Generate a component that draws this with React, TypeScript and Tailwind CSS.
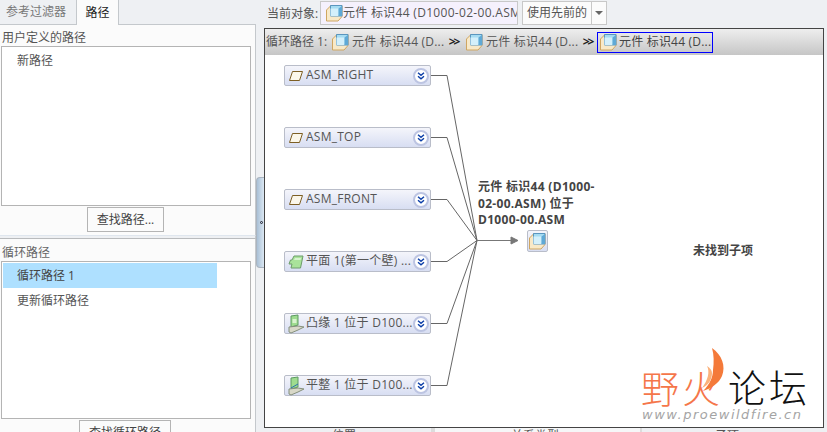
import type { ReactNode } from "react"

const FONT = "font-['Open_Sans','Noto_Sans_CJK_SC',sans-serif]"

function Cube({ className = "" }: { className?: string }) {
  return (
    <svg viewBox="0 0 17 17" className={className}>
      <path d="M0.5 5 L4.5 1 V0.5 H16 V11.5 L12 16 H0.5 Z" fill="#f8e9c8" stroke="#cfa662" />
      <path d="M4.5 0.5 H16 V11 H4.5 Z" fill="#a6dcf2" stroke="#5a96bf" />
      <path d="M4.5 3.5 H12.5 V11 H4.5 Z" fill="#d4f0fb" />
      <path d="M12.5 11 L16 11 V1 L12.5 3.5 Z" fill="#5fa9d6" />
    </svg>
  )
}

function DatumIcon() {
  return (
    <svg viewBox="0 0 16 12" className="h-3 w-4">
      <path d="M4.5 1.5 H14.5 L11.5 10.5 H1.5 Z" fill="#fbf7ea" stroke="#7d5f24" />
    </svg>
  )
}

function PlaneIcon() {
  return (
    <svg viewBox="0 0 16 14" className="h-[14px] w-4">
      <path d="M4 5 L6 1 H15 L12.5 13 H3 L4 9 H1 L2.5 5 Z" fill="#a9e39a" stroke="#6d9c6a" />
      <path d="M7 3 H13 L12.5 5 H6 Z" fill="#d6f3cd" />
    </svg>
  )
}

function SheetIcon({ line = false }: { line?: boolean }) {
  return (
    <svg viewBox="0 0 17 20" className="h-5 w-[17px]">
      <path d="M3 2 L10 1 V11 L3 13 Z" fill="#9fdc8f" stroke="#5d9a62" />
      <path d="M1 13 L10 12 L16 13 L10 16 L3 19 L1 18 Z" fill="#d8d8c8" stroke="#85907c" />
      {line ? <path d="M3 12 L10 8" stroke="#2a6fb0" /> : <path d="M4.5 5 H8.5 V9 H4.5 Z" fill="#d9f3cf" />}
    </svg>
  )
}

function ExpandButton() {
  return (
    <span className="flex h-[16px] w-[16px] shrink-0 items-center justify-center rounded-full border-2 border-[#bcc4e2] bg-white">
      <svg viewBox="0 0 8 8" className="h-2 w-2" fill="none" stroke="#0b3ea8" strokeWidth="1.4">
        <path d="M1 0.8 L4 3.4 L7 0.8" />
        <path d="M1 4.2 L4 6.8 L7 4.2" />
      </svg>
    </span>
  )
}

const nodes: { label: string; top: string; icon: ReactNode }[] = [
  { label: "ASM_RIGHT", top: "top-[10px]", icon: <DatumIcon /> },
  { label: "ASM_TOP", top: "top-[72px]", icon: <DatumIcon /> },
  { label: "ASM_FRONT", top: "top-[134px]", icon: <DatumIcon /> },
  { label: "平面 1(第一个壁) ...", top: "top-[196px]", icon: <PlaneIcon /> },
  { label: "凸缘 1 位于 D100...", top: "top-[258px]", icon: <SheetIcon /> },
  { label: "平整 1 位于 D100...", top: "top-[320px]", icon: <SheetIcon line /> },
]

const lineYs = [20, 82, 144, 206, 268, 330]

function Crumb({ selected = false }: { selected?: boolean }) {
  return (
    <span
      className={
        selected
          ? "-ml-[3px] flex h-[21px] w-[116px] items-center gap-[2px] border border-[#0000ff] pl-[2px] tracking-[0.2px] text-[#444]"
          : "flex w-[114px] items-center gap-[3px] tracking-[0.2px] text-[#555]"
      }
    >
      <Cube className="h-[17px] w-[17px] shrink-0" />
      <span className="whitespace-nowrap">元件 标识44 (D...</span>
    </span>
  )
}

function Chevrons() {
  return <span className="mr-[5px] w-[15px] text-center font-bold tracking-[-2px] text-[#222]">{">>"}</span>
}

function ListPanelButton({ label, className }: { label: string; className: string }) {
  return (
    <div className={`flex shrink-0 items-center justify-center border border-[#b4b4b4] bg-[#fbfbfb] text-[#444] ${className}`}>
      {label}
    </div>
  )
}

export default function App() {
  return (
    <div className={`flex h-[432px] w-[827px] overflow-hidden bg-[#eef0f3] text-xs ${FONT}`}>
      {/* left column */}
      <aside className="flex w-[256px] shrink-0 flex-col">
        <div className="flex h-[24px] shrink-0 items-end">
          <span className="flex h-[24px] w-[76px] items-center justify-center pr-[4px] text-[#777]">参考过滤器</span>
          <span className="z-10 -mb-px flex h-[25px] w-[43px] items-center justify-center border-x border-[#c4c8cc] bg-[#fbfbfb] text-[#222]">
            路径
          </span>
        </div>
        <div className="flex h-[211px] shrink-0 flex-col border-r border-t border-[#c4c8cc] bg-[#fbfbfb] pl-px pr-[4px]">
          <div className="h-[21px] shrink-0 pl-[1px] pt-[4px] leading-[17px] text-[#555]">用户定义的路径</div>
          <div className="h-[160px] shrink-0 border border-[#b4b4b4] bg-white pl-[15px] pt-[4px] leading-[20px] text-[#555]">新路径</div>
          <ListPanelButton label="查找路径..." className="ml-[86px] mt-[1px] h-[25px] w-[77px]" />
        </div>
        <div className="h-[4px] shrink-0 border-y border-r border-t-[#dfe6ee] border-b-[#b9bbbd] border-r-[#c4c8cc] bg-[#eef0f3]" />
        <div className="flex flex-1 flex-col border-r border-[#c4c8cc] bg-[#fbfbfb] pl-px pr-[4px]">
          <div className="h-[22px] shrink-0 pl-[1px] pt-[5px] leading-[17px] text-[#666]">循环路径</div>
          <div className="h-[158px] shrink-0 border border-[#b4b4b4] bg-white p-px">
            <div className="flex h-[25px] w-[214px] items-center bg-[#aee0ff] pl-[14px] text-[#444]">循环路径 1</div>
            <div className="pl-[14px] pt-[3px] leading-[20px] text-[#555]">更新循环路径</div>
          </div>
          <ListPanelButton label="查找循环路径" className="ml-[78px] mt-[1px] h-[25px] w-[92px]" />
        </div>
      </aside>

      {/* splitter */}
      <div className="w-[8px] shrink-0 pt-[177px]">
        <div className="flex h-[91px] w-[8px] items-center justify-end rounded-l-[4px] border border-r-0 border-[#aab4bf] bg-gradient-to-r from-[#a9c0d6] to-[#dbe7f2] pr-[1px]">
          <span className="h-[3px] w-[3px] rounded-full border border-[#223]" />
        </div>
      </div>

      {/* right column */}
      <main className="flex min-w-0 flex-1 flex-col">
        <div className="flex h-[28px] shrink-0 items-start pt-px">
          <span className="ml-[3px] mt-[4px] w-[53px] leading-[17px] text-[#555]">当前对象:</span>
          <div className="flex h-[24px] w-[198px] items-center overflow-hidden border border-[#c8c8c8] bg-[#f5f1fd] pl-[5px] tracking-[0.3px] text-[#555]">
            <Cube className="h-[17px] w-[17px] shrink-0" />
            <span className="whitespace-nowrap">元件 标识44 (D1000-02-00.ASM</span>
          </div>
          <div className="ml-[4px] flex h-[24px] w-[85px] border border-[#c8c8c8] bg-[#fbfbfb] text-[#555]">
            <span className="flex flex-1 items-center justify-center border-r border-[#c8c8c8]">使用先前的</span>
            <span className="flex w-[14px] items-center justify-center">
              <span className="border-x-[4px] border-t-[4px] border-x-transparent border-t-[#666]" />
            </span>
          </div>
        </div>

        <div className="relative mr-[3px] flex h-[400px] shrink-0 flex-col border border-[#444] bg-white">
          <div className="flex h-[26px] shrink-0 items-center bg-gradient-to-b from-[#eeeeee] to-[#c6c6c6] pl-px">
            <span className="mr-[5px] w-[61px] whitespace-nowrap text-[#555]">循环路径 1:</span>
            <Crumb />
            <Chevrons />
            <Crumb />
            <Chevrons />
            <Crumb selected />
          </div>

          {/* diagram canvas */}
          <div className="relative flex-1">
            <svg className="absolute inset-0 h-full w-full" fill="none" stroke="#666">
              {lineYs.map((y) => (
                <path key={y} d={`M166 ${y + 0.5} H182 L212 185.5`} />
              ))}
              <path d="M212 185.5 H246" stroke="#777" />
              <path d="M246 182 L253 185.5 L246 189 Z" fill="#777" stroke="#777" />
            </svg>

            {nodes.map((n) => (
              <div
                key={n.label}
                className={`absolute left-[19px] flex h-[21px] w-[147px] items-center rounded-[2px] border border-[#b9bdc9] bg-gradient-to-b from-[#f4f5fb] to-[#d8def2] pl-[1px] pr-[1px] ${n.top}`}
              >
                <span className="flex w-[20px] shrink-0 justify-center">{n.icon}</span>
                <span className="flex-1 overflow-hidden whitespace-nowrap pb-[2px] tracking-[0.25px] text-[#555]">{n.label}</span>
                <ExpandButton />
              </div>
            ))}

            <div className="absolute left-[213px] top-[124px] w-[125px] font-bold leading-[16.5px] tracking-[0.3px] text-[#444]">
              元件 标识44 (D1000-
              <br />
              02-00.ASM) 位于
              <br />
              D1000-00.ASM
            </div>
            <div className="absolute left-[262px] top-[175px] flex h-[22px] w-[21px] items-center justify-center rounded-[2px] border border-[#b9bdc9] bg-gradient-to-b from-[#f4f5fb] to-[#d8def2]">
              <Cube className="h-[17px] w-[17px]" />
            </div>
            <div className="absolute left-[428px] top-[187px] font-bold leading-[18px] text-[#444]">未找到子项</div>

            {/* watermark */}
            <div className="absolute bottom-[1px] right-[2px] h-[82px] w-[182px]">
              <span className="absolute left-[2px] top-[25px] text-[38px] font-light leading-[38px] tracking-[3px] text-[#f5764a]">野火</span>
              <svg viewBox="0 0 28 50" className="absolute left-[59px] top-[2px] h-[50px] w-[28px]">
                <path d="M14 2 C24 9 28 20 24 30 C21 37 14 42 5 45 C12 38 15 31 15 24 C16 16 16 9 14 2 Z" fill="#f47a3a" />
                <path d="M9 20 C12 26 10 34 4 42 C11 39 14 33 14 27 C14 24 12 22 9 20 Z" fill="#fbb27c" />
              </svg>
              <span className="absolute left-[89px] top-[24px] text-[38px] font-light leading-[38px] tracking-[3px] text-[#111]">论坛</span>
              <span className="absolute left-[3px] top-[64px] whitespace-nowrap font-['DejaVu_Sans',sans-serif] text-[13px] italic leading-[14px] tracking-[1.5px] text-[#a4a4a4]">
                www.proewildfire.cn
              </span>
            </div>
          </div>
        </div>

        {/* column headers, cut off by the window */}
        <div className="flex h-[4px] shrink-0 overflow-hidden leading-[15px] text-[#555]">
          <span className="w-[171px] border-r-4 border-[#dcdcdc] pl-[68px]">位置</span>
          <span className="w-[207px] border-r-2 border-[#dcdcdc] bg-[#f6f7f8] pl-[76px]">关系类型</span>
          <span className="pl-[73px]">子项</span>
        </div>
      </main>
    </div>
  )
}
